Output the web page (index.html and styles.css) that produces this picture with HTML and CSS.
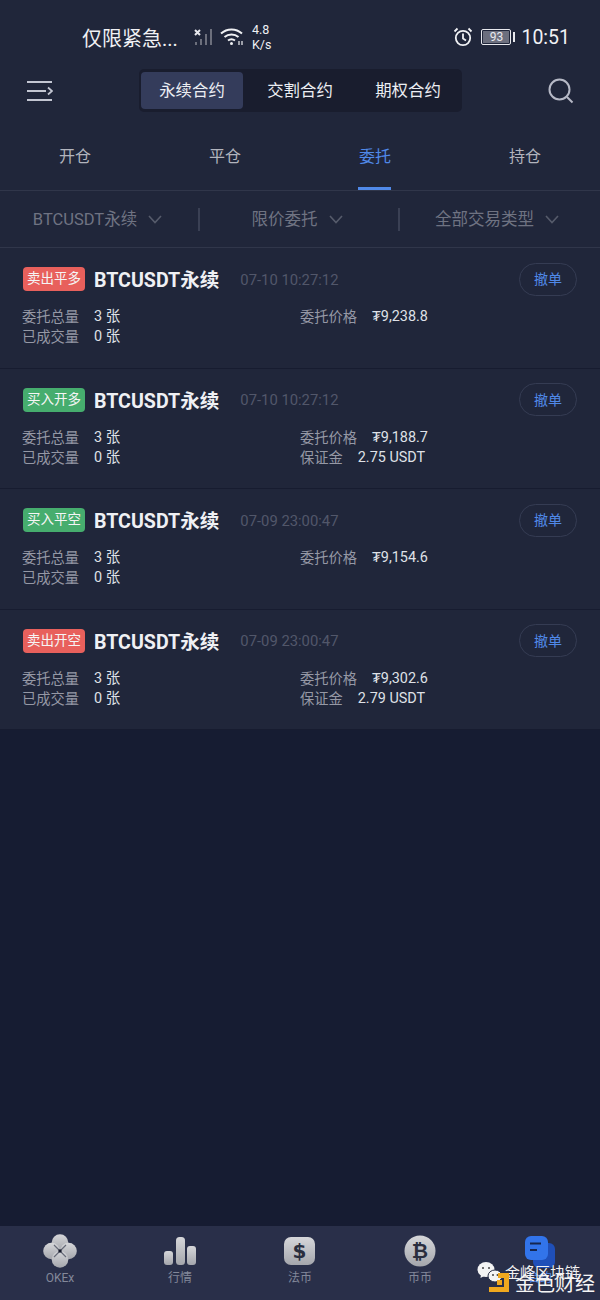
FILE: index.html
```html
<!DOCTYPE html>
<html lang="en">
<head>
    <meta charset="UTF-8">
    <meta name="viewport" content="width=device-width, initial-scale=1.0">
    <title>委托</title>
    <link rel="stylesheet" href="styles.css">
</head>
<body>
    <div class="app">
        <div class="status-bar">
            <span class="carrier">仅限紧急...</span>
            <svg class="signal-icon" width="22" height="20" viewBox="0 0 22 20">
                <path d="M1 3l5 5M6 3l-5 5" stroke="#e8e9ee" stroke-width="2"/>
                <rect x="1" y="15" width="2" height="3" fill="#6c6f7c"/>
                <rect x="6" y="12" width="2" height="6" fill="#6c6f7c"/>
                <rect x="11" y="7" width="2" height="11" fill="#6c6f7c"/>
                <rect x="16" y="2" width="2" height="16" fill="#6c6f7c"/>
            </svg>
            <svg class="wifi-icon" width="24" height="20" viewBox="0 0 24 20" fill="none" stroke="#f0f1f4" stroke-width="2">
                <path d="M1 6.500C7 1 16 1 22 6.500"/>
                <path d="M4.500 10C8.500 6.500 14.500 6.500 18.500 10"/>
                <path d="M8 13.500C10 12 13 12 15 13.500"/>
                <circle cx="11.500" cy="16.500" r="1.500" fill="#f0f1f4" stroke="none"/>
                <path d="M19 14v4M22 14v4" stroke-width="1.200"/>
            </svg>
            <div class="net-speed"><span>4.8</span><span>K/s</span></div>
            <div class="status-right">
                <svg width="20" height="20" viewBox="0 0 20 20" fill="none" stroke="#f0f1f4" stroke-width="1.800">
                    <circle cx="10" cy="11" r="7.200"/>
                    <path d="M10 6.500V11.500L13 13.500"/>
                    <path d="M1.500 4.500L4.500 1.500M18.500 4.500L15.500 1.500"/>
                </svg>
                <div class="battery">
                    <div class="battery-body"><span>93</span></div>
                    <div class="battery-tip"></div>
                </div>
                <span class="clock">10:51</span>
            </div>
        </div>

        <div class="top-nav">
            <svg class="menu-icon" width="26" height="22" viewBox="0 0 26 22" fill="none" stroke="#c3c6d2" stroke-width="2">
                <path d="M0 2H25M0 11H19M0 20H25"/>
                <path d="M21 7.500L25 11L21 14.500" stroke-width="1.800"/>
            </svg>
            <div class="contract-switch">
                <div class="contract active">永续合约</div>
                <div class="contract">交割合约</div>
                <div class="contract">期权合约</div>
            </div>
            <svg class="search-icon" width="26" height="26" viewBox="0 0 26 26" fill="none" stroke="#b6b9c6" stroke-width="2">
                <circle cx="11.500" cy="11.500" r="10"/>
                <path d="M19 19L24.500 24.500"/>
            </svg>
        </div>

        <div class="tabs">
            <div class="tab">开仓</div>
            <div class="tab">平仓</div>
            <div class="tab active">委托</div>
            <div class="tab">持仓</div>
        </div>

        <div class="filters">
            <div class="filter filter-first">BTCUSDT永续
                <svg class="chevron" width="14" height="9" viewBox="0 0 14 9" fill="none"><path d="M1 1L7 7.500L13 1"/></svg>
            </div>
            <div class="filter filter-mid">限价委托
                <svg class="chevron" width="14" height="9" viewBox="0 0 14 9" fill="none"><path d="M1 1L7 7.500L13 1"/></svg>
            </div>
            <div class="filter filter-last">全部交易类型
                <svg class="chevron" width="14" height="9" viewBox="0 0 14 9" fill="none"><path d="M1 1L7 7.500L13 1"/></svg>
            </div>
        </div>

        <div class="orders">
            <div class="order">
                <div class="order-head">
                    <span class="badge sell">卖出平多</span>
                    <span class="symbol">BTCUSDT永续</span>
                    <span class="time">07-10 10:27:12</span>
                    <button class="cancel">撤单</button>
                </div>
                <div class="order-grid">
                    <div class="cell"><span class="label">委托总量</span><span class="value">3 张</span></div>
                    <div class="cell"><span class="label">委托价格</span><span class="value">₮9,238.8</span></div>
                    <div class="cell"><span class="label">已成交量</span><span class="value">0 张</span></div>
                </div>
            </div>
            <div class="order">
                <div class="order-head">
                    <span class="badge buy">买入开多</span>
                    <span class="symbol">BTCUSDT永续</span>
                    <span class="time">07-10 10:27:12</span>
                    <button class="cancel">撤单</button>
                </div>
                <div class="order-grid">
                    <div class="cell"><span class="label">委托总量</span><span class="value">3 张</span></div>
                    <div class="cell"><span class="label">委托价格</span><span class="value">₮9,188.7</span></div>
                    <div class="cell"><span class="label">已成交量</span><span class="value">0 张</span></div>
                    <div class="cell"><span class="label">保证金</span><span class="value">2.75 USDT</span></div>
                </div>
            </div>
            <div class="order">
                <div class="order-head">
                    <span class="badge buy">买入平空</span>
                    <span class="symbol">BTCUSDT永续</span>
                    <span class="time">07-09 23:00:47</span>
                    <button class="cancel">撤单</button>
                </div>
                <div class="order-grid">
                    <div class="cell"><span class="label">委托总量</span><span class="value">3 张</span></div>
                    <div class="cell"><span class="label">委托价格</span><span class="value">₮9,154.6</span></div>
                    <div class="cell"><span class="label">已成交量</span><span class="value">0 张</span></div>
                </div>
            </div>
            <div class="order">
                <div class="order-head">
                    <span class="badge sell">卖出开空</span>
                    <span class="symbol">BTCUSDT永续</span>
                    <span class="time">07-09 23:00:47</span>
                    <button class="cancel">撤单</button>
                </div>
                <div class="order-grid">
                    <div class="cell"><span class="label">委托总量</span><span class="value">3 张</span></div>
                    <div class="cell"><span class="label">委托价格</span><span class="value">₮9,302.6</span></div>
                    <div class="cell"><span class="label">已成交量</span><span class="value">0 张</span></div>
                    <div class="cell"><span class="label">保证金</span><span class="value">2.79 USDT</span></div>
                </div>
            </div>
        </div>

        <div class="bottom-bar">
            <div class="bottom-item">
                <svg width="36" height="36" viewBox="0 0 36 36">
                    <defs>
                        <linearGradient id="grey" x1="0" y1="0" x2="0" y2="1">
                            <stop offset="0" stop-color="#d6d7da"/>
                            <stop offset="1" stop-color="#a4a6ac"/>
                        </linearGradient>
                    </defs>
                    <circle cx="18" cy="9.500" r="8.300" fill="url(#grey)"/>
                    <circle cx="9.500" cy="18" r="8.300" fill="url(#grey)"/>
                    <circle cx="26.500" cy="18" r="8.300" fill="url(#grey)"/>
                    <circle cx="18" cy="26.500" r="8.300" fill="url(#grey)"/>
                    <path d="M12 12L24 24M24 12L12 24" stroke="#666a78" stroke-width="1.200"/>
                    <rect x="16.500" y="16.500" width="3" height="3" fill="#15192a"/>
                </svg>
                <span>OKEx</span>
            </div>
            <div class="bottom-item">
                <svg width="36" height="36" viewBox="0 0 36 36" fill="url(#grey)">
                    <rect x="2" y="18" width="9" height="14" rx="3"/>
                    <rect x="14" y="4" width="9" height="28" rx="3.500"/>
                    <rect x="25" y="13" width="9" height="19" rx="3"/>
                </svg>
                <span>行情</span>
            </div>
            <div class="bottom-item">
                <svg width="36" height="36" viewBox="0 0 36 36">
                    <rect x="2" y="4" width="31" height="28" rx="7" fill="url(#grey)"/>
                    <text class="icon-glyph" x="17.500" y="25" text-anchor="middle">$</text>
                </svg>
                <span>法币</span>
            </div>
            <div class="bottom-item">
                <svg width="36" height="36" viewBox="0 0 36 36">
                    <circle cx="18" cy="18" r="15.500" fill="url(#grey)"/>
                    <text class="icon-glyph" x="18" y="25" text-anchor="middle">₿</text>
                </svg>
                <span>币币</span>
            </div>
            <div class="bottom-item">
                <svg width="36" height="36" viewBox="0 0 36 36">
                    <rect x="11" y="10" width="22" height="25" rx="6" fill="#1f4fb8"/>
                    <rect x="3" y="3" width="23" height="24" rx="6" fill="#3274ea"/>
                    <path d="M8 10.500H19M8 17H15" stroke="#15264f" stroke-width="2.200"/>
                </svg>
                <span class="active-label">合约</span>
            </div>
        </div>

        <!-- watermark on top of the tab bar -->
        <div class="watermark">
            <svg class="wechat" width="26" height="24" viewBox="0 0 26 24">
                <ellipse cx="9" cy="8.500" rx="8.500" ry="7.500" fill="#f4f4f4"/>
                <path d="M4 13L3.500 17L8 14.500Z" fill="#f4f4f4"/>
                <ellipse cx="18" cy="15" rx="7" ry="6" fill="#f4f4f4" stroke="#2a3047"/>
                <circle cx="6" cy="7" r="1" fill="#444"/>
                <circle cx="12" cy="7" r="1" fill="#444"/>
                <circle cx="16" cy="14" r="1" fill="#444"/>
                <circle cx="20.500" cy="14" r="1" fill="#444"/>
            </svg>
            <span class="wm-name">金峰区块链</span>
            <svg class="wm-logo" width="22" height="20" viewBox="0 0 22 20" fill="#f0a81e">
                <path d="M9 0H20V19H0V14H15V5H9Z"/>
                <rect x="8" y="7" width="5" height="5"/>
            </svg>
            <span class="wm-brand">金色财经</span>
        </div>
    </div>
</body>
</html>
```

FILE: styles.css
```css
:root {
    --top-bg: #20263a;
    --card-bg: #20263a;
    --page-bg: #161c32;
    --bar-bg: #292f49;
    --line: #30364a;
    --blue: #5089e8;
    --grey-text: #9598a5;
    --dim-text: #6f7382;
}

* {
    box-sizing: border-box;
}

body {
    margin: 0;
    padding: 0;
    background-color: var(--page-bg);
    font-family: Roboto, "Noto Sans CJK SC", sans-serif;
}

.app {
    position: relative;
    width: 600px;
    height: 1300px;
    display: flex;
    flex-direction: column;
    overflow: hidden;
}

/* status bar */
.status-bar {
    height: 60px;
    padding: 14px 30px 0 82px;
    display: flex;
    align-items: center;
    background-color: var(--top-bg);
    color: #f0f1f4;
}

.carrier {
    width: 112px;
    font-size: 20px;
    white-space: nowrap;
}

.wifi-icon {
    margin-left: 4px;
}

.net-speed {
    margin-left: 8px;
    display: flex;
    flex-direction: column;
    font-size: 12.500px;
    line-height: 15px;
}

.status-right {
    margin-left: auto;
    display: flex;
    align-items: center;
}

.battery {
    margin-left: 8px;
    display: flex;
    align-items: center;
}

.battery-body {
    width: 30px;
    height: 16px;
    padding: 1px;
    border: 1px solid #e8e9ee;
    border-radius: 2px;
    display: flex;
}

.battery-body span {
    flex: 1;
    background-color: #6c6f7e;
    font-size: 12px;
    line-height: 12px;
    text-align: center;
    color: #e8e9ee;
}

.battery-tip {
    width: 2px;
    height: 10px;
    margin-left: 2px;
    background-color: #e8e9ee;
}

.clock {
    margin-left: 6px;
    font-size: 19.500px;
}

/* top nav */
.top-nav {
    height: 62px;
    padding: 0 26px 0 27px;
    display: flex;
    align-items: center;
    justify-content: space-between;
    background-color: var(--top-bg);
}

.contract-switch {
    display: flex;
    gap: 6px;
    height: 43px;
    padding: 3px 3px 3px 2px;
    margin-top: -1px;
    background-color: #191d2e;
    border-radius: 5px;
}

.contract {
    width: 102px;
    height: 37px;
    font-size: 16.400px;
    line-height: 37px;
    text-align: center;
    color: #eceef3;
    border-radius: 4px;
}

.contract.active {
    background-color: #343c5b;
}

/* tabs */
.tabs {
    height: 69px;
    display: grid;
    grid-template-columns: repeat(4, 150px);
    background-color: var(--top-bg);
    border-bottom: 1px solid var(--line);
}

.tab {
    display: flex;
    justify-content: center;
    padding-top: 24px;
    font-size: 16px;
    line-height: 22px;
    color: #b2b4bd;
}

.tab.active {
    position: relative;
    color: var(--blue);
}

.tab.active::after {
    content: '';
    position: absolute;
    left: 58px;
    bottom: 0;
    width: 33px;
    height: 3px;
    background-color: var(--blue);
}

/* filters */
.filters {
    height: 57px;
    display: grid;
    grid-template-columns: 198px 200px 202px;
    align-items: center;
    background-color: var(--top-bg);
    border-bottom: 1px solid var(--line);
}

.filter {
    height: 23px;
    display: flex;
    align-items: center;
    justify-content: center;
    padding-top: 2px;
    font-size: 16.500px;
    line-height: 20px;
    color: var(--dim-text);
    white-space: nowrap;
}

.filter-mid, .filter-last {
    border-left: 2px solid #3a4054;
}

.filter-first {
    padding-right: 3px;
}

.filter-mid {
    padding-right: 4px;
}

.filter-last {
    padding-right: 6px;
}

.chevron {
    margin-left: 11px;
    margin-top: -2px;
    stroke: #565b6b;
    stroke-width: 1.600;
}

/* order cards */
.orders {
    display: flex;
    flex-direction: column;
}

.order {
    height: 120.500px;
    padding: 15px 23px 0 22px;
    background-color: var(--card-bg);
    border-bottom: 1px solid #171c30;
}

.order-head {
    height: 32px;
    display: flex;
    align-items: center;
}

.badge {
    width: 62px;
    height: 24px;
    margin-left: 1px;
    border-radius: 4px;
    font-size: 13.500px;
    line-height: 23px;
    text-align: center;
    color: #f5f5f5;
}

.badge.sell {
    background-color: #e8605c;
}

.badge.buy {
    background-color: #46ad6e;
}

.symbol {
    margin-left: 9px;
    margin-bottom: 1px;
    font-size: 19.600px;
    font-weight: 700;
    color: #eff0f4;
    white-space: nowrap;
}

.time {
    margin-left: 21px;
    margin-top: 1px;
    font-size: 14.800px;
    color: #52576a;
}

.cancel {
    margin-left: auto;
    width: 58px;
    height: 33px;
    padding: 0 0 2px;
    background: transparent;
    border: 1px solid #353c53;
    border-radius: 17px;
    font-family: inherit;
    font-size: 14px;
    color: var(--blue);
}

.order-grid {
    margin-top: 12px;
    display: grid;
    grid-template-columns: 278px 1fr;
    grid-auto-rows: 20px;
}

.cell {
    display: flex;
    align-items: center;
    line-height: 20px;
    white-space: nowrap;
}

.label {
    margin-right: 15px;
    font-size: 14.250px;
    color: var(--grey-text);
}

.value {
    font-size: 14.400px;
    color: #dfe1e7;
}

/* bottom bar */
.bottom-bar {
    position: absolute;
    left: 0;
    right: 0;
    bottom: 0;
    height: 74px;
    padding-top: 7px;
    display: grid;
    grid-template-columns: repeat(5, 120px);
    background-color: var(--bar-bg);
}

.bottom-item {
    display: flex;
    flex-direction: column;
    align-items: center;
    font-size: 12px;
    color: #83889a;
}

.bottom-item span {
    margin-top: 2px;
    line-height: 15px;
}

.bottom-item .active-label {
    color: var(--blue);
}

.icon-glyph {
    font-family: "DejaVu Sans", sans-serif;
    font-size: 20px;
    font-weight: 700;
    fill: #2a2e3e;
}

/* watermark */
.watermark {
    position: absolute;
    left: 477px;
    top: 1261px;
    width: 123px;
    height: 39px;
}

.wechat {
    position: absolute;
    left: 0;
    top: 0;
}

.wm-name {
    position: absolute;
    left: 28px;
    top: 3px;
    font-size: 15px;
    line-height: 18px;
    color: #f2f2f2;
    white-space: nowrap;
}

.wm-logo {
    position: absolute;
    left: 12px;
    top: 12px;
}

.wm-brand {
    position: absolute;
    left: 38px;
    top: 10px;
    font-size: 20px;
    line-height: 26px;
    color: #f5f5f5;
    white-space: nowrap;
}
```
